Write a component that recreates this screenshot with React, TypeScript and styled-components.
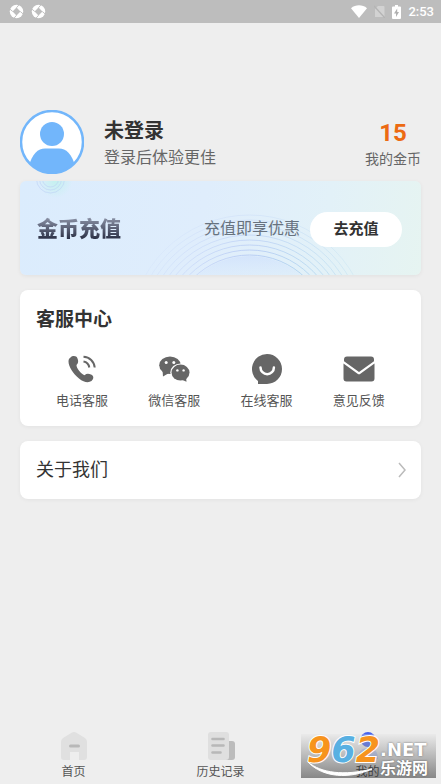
import React from 'react';
import styled, { createGlobalStyle } from 'styled-components';

const GlobalStyle = createGlobalStyle`
  * { box-sizing: border-box; }
  body {
    margin: 0;
    background: #eeeeee;
    color: #333333;
    font-family: Roboto, "Noto Sans CJK SC", sans-serif;
  }
  button { font-family: inherit; color: inherit; border: 0; padding: 0; background: none; cursor: pointer; }
  a { color: inherit; text-decoration: none; }
  h2, p { margin: 0; }
  svg { display: block; }
`;

const Page = styled.div`
  position: relative;
  min-height: 100vh;
  display: flex;
  flex-direction: column;
`;

const StatusBar = styled.header`
  height: 23px;
  padding: 0 7px 0 9px;
  display: flex;
  align-items: center;
  justify-content: space-between;
  background: #bdbdbd;
  color: #ffffff;
`;

const StatusGroup = styled.div`
  display: flex;
  align-items: center;
  gap: 7px;
`;

const Clock = styled.time`
  font-size: 13px;
  line-height: 23px;
  font-weight: 500;
`;

const Main = styled.main`
  flex: 1;
  padding: 86px 20px 0;
`;

const Profile = styled.section`
  display: flex;
  align-items: center;
  height: 66px;
`;

const ProfileText = styled.div`
  flex: 1;
  margin-left: 20px;
  padding-top: 4px;
`;

const Name = styled.h2`
  font-size: 20px;
  line-height: 28px;
  font-weight: 700;
`;

const Hint = styled.p`
  font-size: 16px;
  line-height: 26px;
  color: #666666;
`;

const Coins = styled.div`
  padding-top: 6px;
  text-align: center;
`;

const CoinCount = styled.p`
  font-size: 24px;
  line-height: 28px;
  font-weight: 700;
  color: #ec6a12;
`;

const CoinLabel = styled.p`
  font-size: 14px;
  line-height: 24px;
  color: #666666;
`;

const Banner = styled.section`
  position: relative;
  overflow: hidden;
  display: flex;
  align-items: center;
  height: 94px;
  margin-top: 6px;
  padding: 2px 19px 0 17px;
  border-radius: 6px;
  background: linear-gradient(100deg, #dbecfd 0%, #dfedfc 45%, #e2f1f8 75%, #e6f4f1 100%);
  box-shadow: 0 1px 4px rgba(0, 0, 0, 0.06);
`;

const BannerArt = styled.svg`
  position: absolute;
  inset: 0;
  width: 100%;
  height: 100%;
`;

const BannerTitle = styled.h2`
  position: relative;
  flex: 1;
  font-size: 21px;
  line-height: 28px;
  font-weight: 900;
  color: transparent;
  background: linear-gradient(#8a91a5 10%, #262b40 90%);
  background-clip: text;
  -webkit-background-clip: text;
`;

const BannerNote = styled.p`
  position: relative;
  margin-right: 10px;
  font-size: 16px;
  line-height: 24px;
  color: #68737f;
`;

const RechargeButton = styled.button`
  position: relative;
  width: 92px;
  height: 35px;
  border-radius: 18px;
  background: #ffffff;
  font-size: 15px;
  line-height: 35px;
  font-weight: 700;
`;

const Card = styled.section`
  margin-top: 15px;
  padding: 16px 16px 15px;
  border-radius: 8px;
  background: #ffffff;
  box-shadow: 0 1px 4px rgba(0, 0, 0, 0.05);
`;

const CardTitle = styled.h2`
  font-size: 19px;
  line-height: 28px;
  font-weight: 700;
`;

const Services = styled.div`
  display: grid;
  grid-template-columns: repeat(4, 1fr);
  margin-top: 18px;
`;

const Service = styled.button`
  display: flex;
  flex-direction: column;
  align-items: center;
  gap: 6px;
  font-size: 13px;
  line-height: 20px;
  color: #555555;
  svg { color: #666666; }
`;

const IconBox = styled.span`
  display: flex;
  align-items: center;
  justify-content: center;
  height: 33px;
`;

const AboutLink = styled.a`
  display: flex;
  align-items: center;
  justify-content: space-between;
  height: 58px;
  margin-top: 15px;
  padding: 0 14px 0 16px;
  border-radius: 8px;
  background: #ffffff;
  box-shadow: 0 1px 4px rgba(0, 0, 0, 0.05);
  font-size: 18px;
  line-height: 26px;
`;

const TabBar = styled.nav`
  display: grid;
  grid-template-columns: repeat(3, 1fr);
  height: 56px;
`;

const Tab = styled.a<{ $active: boolean }>`
  display: flex;
  flex-direction: column;
  align-items: center;
  padding-top: 3px;
  gap: 2px;
  font-size: 12px;
  line-height: 18px;
  color: ${(p) => (p.$active ? '#111111' : '#555555')};
`;

const Watermark = styled.aside`
  position: absolute;
  right: 5px;
  bottom: 6px;
  width: 135px;
  height: 44px;
  display: flex;
  padding-left: 6px;
  background: linear-gradient(rgba(225, 225, 225, 0.3), rgba(110, 110, 110, 0.45) 55%, rgba(80, 80, 80, 0.65));
  color: #ffffff;
`;

const Digits = styled.div`
  position: relative;
  font: italic 700 35px/33px "DejaVu Sans", sans-serif;
  -webkit-text-stroke: 2px #ffffff;
  paint-order: stroke fill;
`;

const Digit = styled.span<{ $color: string }>`
  color: ${(p) => p.$color};
`;

const Swoosh = styled.svg`
  position: absolute;
  left: 7px;
  bottom: 1px;
`;

const SiteName = styled.div`
  position: relative;
  padding-top: 6px;
  white-space: nowrap;
`;

const Domain = styled.div`
  font: 700 18px/19px "DejaVu Sans", sans-serif;
  text-shadow: 0 0 2px #666666;
`;

const SiteLabel = styled.div`
  font-size: 16px;
  line-height: 19px;
  font-weight: 700;
  text-shadow: 0 0 2px #555555;
`;

const AppMark = () => (
  <svg width="15" height="15" viewBox="0 0 16 16" aria-hidden="true">
    <circle cx="8" cy="8" r="7.2" fill="#fff" />
    <path d="M8 3.800 12.200 8 8 12.200 3.800 8Z" fill="#bdbdbd" />
    <path d="M8 4 10.500 1M12 8l3 2.500M8 12l-2.500 3M4 8 1 5.500" stroke="#bdbdbd" strokeWidth="1" />
  </svg>
);

const Wifi = () => (
  <svg width="16" height="13" viewBox="0 0 16 13" aria-hidden="true">
    <path d="M0 3.2C4.6-.6 11.4-.6 16 3.2L8 13Z" fill="#fff" />
  </svg>
);

const NoSim = () => (
  <svg width="11" height="13" viewBox="0 0 11 13" aria-hidden="true">
    <path d="M4 1h5.5a1 1 0 0 1 1 1v10H1V4Z" fill="#d2d2d2" />
    <path d="M0 1l11 12" stroke="#b4b4b4" strokeWidth="1.4" />
  </svg>
);

const Battery = () => (
  <svg width="9" height="14" viewBox="0 0 9 14" aria-hidden="true">
    <path d="M3 0h3v1.5h2a1 1 0 0 1 1 1V13a1 1 0 0 1-1 1H1a1 1 0 0 1-1-1V2.500a1 1 0 0 1 1-1h2Z" fill="#fff" />
    <path d="M5.200 3.500 2 8.500h2V12l3-5H5.200Z" fill="#b0b0b0" />
  </svg>
);

const Avatar = () => (
  <svg width="64" height="64" viewBox="0 0 64 64" role="img" aria-label="头像">
    <defs>
      <clipPath id="face"><circle cx="32" cy="32" r="31" /></clipPath>
    </defs>
    <circle cx="32" cy="32" r="31" fill="#fff" />
    <g clipPath="url(#face)" fill="#72b6fb">
      <circle cx="32" cy="24" r="12" />
      <path d="M9 56C12 44 18 38.500 25 38.500H39C46 38.500 52 44 55 56V64H9Z" />
    </g>
    <circle cx="32" cy="32" r="31" fill="none" stroke="#72b6fb" strokeWidth="2.500" />
  </svg>
);

const rings = [80, 85, 90, 95, 100, 105, 110, 115, 120];
const smallRings = [8, 11, 14];

const Art = () => (
  <BannerArt viewBox="0 0 402 94" preserveAspectRatio="xMidYMid slice" aria-hidden="true">
    <defs>
      <linearGradient id="ring" x1="0" x2="1">
        <stop offset="0" stopColor="#c4d3f7" stopOpacity=".5" />
        <stop offset=".5" stopColor="#b9cdf4" />
        <stop offset="1" stopColor="#b2daee" />
      </linearGradient>
      <linearGradient id="disc" x1="0" x2="0" y1="0" y2="1">
        <stop offset="0" stopColor="#cfe0fc" stopOpacity=".7" />
        <stop offset=".2" stopColor="#d9ebfc" stopOpacity="0" />
      </linearGradient>
      <radialGradient id="mint">
        <stop offset="0" stopColor="#c4f1ef" />
        <stop offset="1" stopColor="#c4f1ef" stopOpacity="0" />
      </radialGradient>
    </defs>
    <circle cx="230" cy="154" r="79" fill="url(#disc)" />
    {rings.map((r, i) => (
      <circle key={r} cx="230" cy="154" r={r} fill="none" stroke="url(#ring)" opacity={1 - i * 0.09} />
    ))}
    <circle cx="36" cy="0" r="17" fill="url(#mint)" />
    {smallRings.map((r) => (
      <circle key={r} cx="31" cy="-2" r={r} fill="none" stroke="#b9cdf5" opacity=".5" />
    ))}
  </BannerArt>
);

const PhoneIcon = () => (
  <svg width="28" height="28" viewBox="0 0 28 28" aria-hidden="true">
    <path
      d="M2.500 2.500C4.500.500 8.500.500 9.500 3.500C10.500 6 10.500 8 8.500 10C8.300 13 13 19 16.500 20.200C18.500 18.500 20.500 18.300 23 19.600C26 21 26 24 23.500 26C20.500 28 16 27.500 11 23.500C5 18.500.500 11.500.500 6.500C.500 4.500 1.200 3.400 2.500 2.500Z"
      fill="currentColor"
    />
    <path d="M15.500 6.500C18.500 7 20.800 9.300 21.300 12.500M15.500 1.700C21.500 2 26.200 6.500 26.700 12.500" fill="none" stroke="currentColor" strokeWidth="2" />
  </svg>
);

const WechatIcon = () => (
  <svg width="31" height="26" viewBox="0 0 31 26" aria-hidden="true">
    <path d="M3.500 14 4 20.500 10 17Z" fill="currentColor" />
    <ellipse cx="11" cy="9.200" rx="10.800" ry="8.800" fill="currentColor" />
    <circle cx="7.200" cy="6.600" r="1.500" fill="#fff" />
    <circle cx="14.800" cy="6.600" r="1.500" fill="#fff" />
    <ellipse cx="21.500" cy="16.600" rx="10.200" ry="9.200" fill="#fff" />
    <path d="M21 23 27.500 25.800 27 21Z" fill="currentColor" />
    <ellipse cx="21.500" cy="16.600" rx="9" ry="8" fill="currentColor" />
    <circle cx="18.400" cy="14.400" r="1.200" fill="#fff" />
    <circle cx="24.600" cy="14.400" r="1.200" fill="#fff" />
  </svg>
);

const ChatIcon = () => (
  <svg width="32" height="32" viewBox="0 0 32 32" aria-hidden="true">
    <path d="M16 1a15 15 0 1 1 0 30H7V28A15 15 0 0 1 16 1Z" fill="currentColor" />
    <path d="M9.500 14.500a6.700 6.700 0 0 0 13.400 0" fill="none" stroke="#fff" strokeWidth="2.500" strokeLinecap="round" />
  </svg>
);

const MailIcon = () => (
  <svg width="32" height="26" viewBox="0 0 32 26" aria-hidden="true">
    <path d="M4 .500H28A3 3 0 0 1 31 3.500V5.200L16 16 1 5.200V3.500A3 3 0 0 1 4 .500Z" fill="currentColor" />
    <path d="M.500 7.500 14.600 17.800Q16 18.800 17.400 17.800L31.500 7.500V22.500A3 3 0 0 1 28.500 25.500H3.500A3 3 0 0 1 .500 22.500Z" fill="currentColor" />
  </svg>
);

const Chevron = () => (
  <svg width="10" height="16" viewBox="0 0 10 16" aria-hidden="true">
    <path d="M2 1l6 7-6 7" fill="none" stroke="#bbbbbb" strokeWidth="1.500" />
  </svg>
);

const HomeIcon = () => (
  <svg width="30" height="30" viewBox="0 0 30 30" aria-hidden="true">
    <path d="M13 1.600Q15 .400 17 1.600L26 7Q28 8.500 28 11V26Q28 29 25 29H20V21H11V29H5Q2 29 2 26V11Q2 8.500 4 7Z" fill="#e0e0e0" />
    <path d="M11.500 15h8" stroke="#b8b8b8" strokeWidth="3" strokeLinecap="round" />
  </svg>
);

const HistoryIcon = () => (
  <svg width="30" height="30" viewBox="0 0 30 30" aria-hidden="true">
    <path d="M20 10h6q3 0 3 3v13q0 3-3 3h-6Z" fill="#bcbcbc" />
    <rect x="2" y="1" width="21" height="28" rx="3" fill="#dfdfdf" />
    <path d="M6.500 8h11M6.500 14.500h11M6.500 21.500h8" stroke="#b8b8b8" strokeWidth="2.600" strokeLinecap="round" />
  </svg>
);

const MineIcon = () => (
  <svg width="30" height="30" viewBox="0 0 30 30" aria-hidden="true">
    <path d="M5 28Q5 17 15 17T25 28Z" fill="#c5d0fb" />
    <circle cx="15" cy="8.500" r="7.500" fill="#4663ec" />
    <path d="M7.500 8.500h15" stroke="#aebcff" strokeWidth="3" />
  </svg>
);

const services = [
  { label: '电话客服', icon: <PhoneIcon /> },
  { label: '微信客服', icon: <WechatIcon /> },
  { label: '在线客服', icon: <ChatIcon /> },
  { label: '意见反馈', icon: <MailIcon /> },
];

const tabs = [
  { label: '首页', icon: <HomeIcon />, active: false },
  { label: '历史记录', icon: <HistoryIcon />, active: false },
  { label: '我的', icon: <MineIcon />, active: true },
];

export default function App() {
  return (
    <Page>
      <GlobalStyle />
      <StatusBar>
        <StatusGroup>
          <AppMark />
          <AppMark />
        </StatusGroup>
        <StatusGroup>
          <Wifi />
          <NoSim />
          <Battery />
          <Clock>2:53</Clock>
        </StatusGroup>
      </StatusBar>
      <Main>
        <Profile>
          <Avatar />
          <ProfileText>
            <Name>未登录</Name>
            <Hint>登录后体验更佳</Hint>
          </ProfileText>
          <Coins>
            <CoinCount>15</CoinCount>
            <CoinLabel>我的金币</CoinLabel>
          </Coins>
        </Profile>
        <Banner>
          <Art />
          <BannerTitle>金币充值</BannerTitle>
          <BannerNote>充值即享优惠</BannerNote>
          <RechargeButton type="button">去充值</RechargeButton>
        </Banner>
        <Card>
          <CardTitle>客服中心</CardTitle>
          <Services>
            {services.map((s) => (
              <Service key={s.label} type="button">
                <IconBox>{s.icon}</IconBox>
                {s.label}
              </Service>
            ))}
          </Services>
        </Card>
        <AboutLink href="#about">
          关于我们
          <Chevron />
        </AboutLink>
      </Main>
      <TabBar>
        {tabs.map((t) => (
          <Tab key={t.label} href="#tab" $active={t.active}>
            {t.icon}
            {t.label}
          </Tab>
        ))}
      </TabBar>
      <Watermark>
        <Swoosh width="66" height="16" viewBox="0 0 66 16" aria-hidden="true">
          <path d="M0 1C13 12 36 15 64 8C42 18 15 17 0 1Z" fill="#fff" stroke="#fff" />
        </Swoosh>
        <Digits>
          <Digit $color="#f7941d">9</Digit>
          <Digit $color="#58b0e2">6</Digit>
          <Digit $color="#f7941d">2</Digit>
        </Digits>
        <SiteName>
          <Domain>.NET</Domain>
          <SiteLabel>乐游网</SiteLabel>
        </SiteName>
      </Watermark>
    </Page>
  );
}
